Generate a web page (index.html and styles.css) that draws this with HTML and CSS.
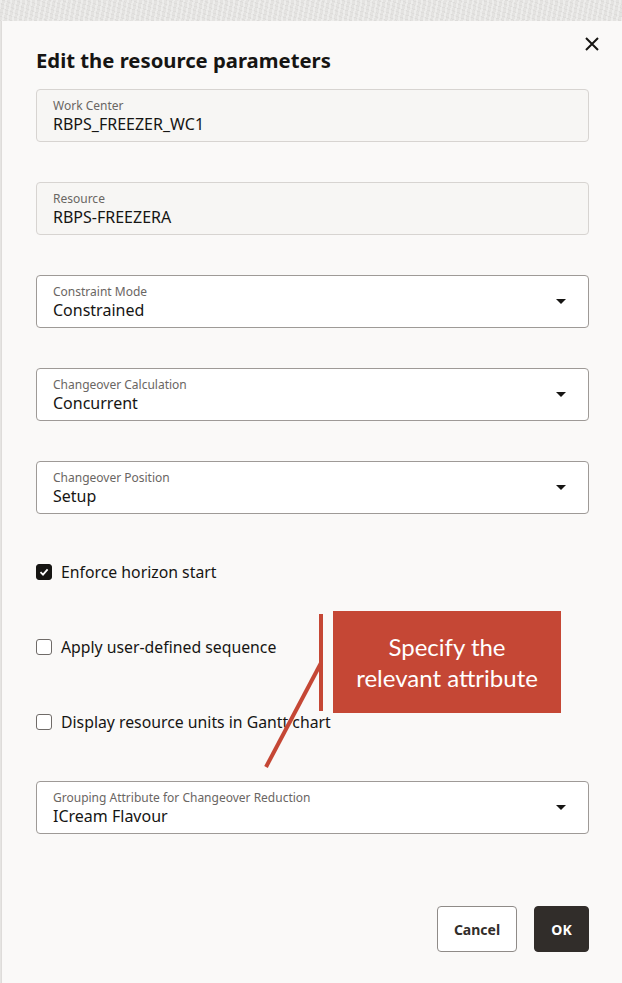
FILE: index.html
```html
<!DOCTYPE html>
<html lang="en">
<head>
<meta charset="utf-8">
<title>Edit the resource parameters</title>
<link rel="stylesheet" href="styles.css">
</head>
<body>
<div class="backdrop"></div>
<div class="dialog">
  <div class="header">
    <h1 class="title">Edit the resource parameters</h1>
    <button class="close" aria-label="Close">
      <svg width="16" height="16" viewBox="0 0 16 16"><path d="M2 2 L14 14 M14 2 L2 14" stroke="#161513" stroke-width="2" fill="none"/></svg>
    </button>
  </div>

  <div class="form">
    <div class="field readonly">
      <div class="label">Work Center</div>
      <div class="value">RBPS_FREEZER_WC1</div>
    </div>
    <div class="field readonly">
      <div class="label">Resource</div>
      <div class="value">RBPS-FREEZERA</div>
    </div>
    <div class="field select">
      <div class="label">Constraint Mode</div>
      <div class="value">Constrained</div>
      <span class="caret"></span>
    </div>
    <div class="field select">
      <div class="label">Changeover Calculation</div>
      <div class="value">Concurrent</div>
      <span class="caret"></span>
    </div>
    <div class="field select">
      <div class="label">Changeover Position</div>
      <div class="value">Setup</div>
      <span class="caret"></span>
    </div>

    <div class="check-row first">
      <span class="box checked">
        <svg width="10" height="10" viewBox="0 0 10 10"><path d="M1.5 5.2 L4 7.6 L8.6 2.4" stroke="#fff" stroke-width="1.8" fill="none"/></svg>
      </span>
      <span class="check-label">Enforce horizon start</span>
    </div>
    <div class="check-row">
      <span class="box"></span>
      <span class="check-label">Apply user-defined sequence</span>
    </div>
    <div class="check-row">
      <span class="box"></span>
      <span class="check-label">Display resource units in Gantt chart</span>
    </div>

    <div class="field select last">
      <div class="label">Grouping Attribute for Changeover Reduction</div>
      <div class="value">ICream Flavour</div>
      <span class="caret"></span>
    </div>
  </div>

  <div class="footer">
    <button class="btn cancel">Cancel</button>
    <button class="btn ok">OK</button>
  </div>
</div>

<div class="callout">
  <svg class="callout-lines" width="70" height="160" viewBox="0 0 70 160">
    <rect x="55" y="3" width="4" height="97" fill="#c54735"/>
    <path d="M57 52 L2 156" stroke="#c54735" stroke-width="4" fill="none"/>
  </svg>
  <div class="callout-box">Specify the<br>relevant attribute</div>
</div>
</body>
</html>
```

FILE: styles.css
```css
* { box-sizing: border-box; }

html, body {
  margin: 0;
  padding: 0;
}

body {
  width: 622px;
  height: 983px;
  overflow: hidden;
  background: #e5e4e2;
  font-family: "Noto Sans", "Open Sans", sans-serif;
  color: #161513;
  position: relative;
}

.backdrop {
  height: 21px;
  background:
    repeating-linear-gradient(100deg, rgba(255,255,255,0.35) 0 2px, rgba(0,0,0,0) 2px 5px),
    repeating-linear-gradient(20deg, rgba(0,0,0,0.03) 0 1px, rgba(0,0,0,0) 1px 4px),
    #e4e3e1;
}

.dialog {
  height: 962px;
  margin-left: 1px;
  border-left: 1px solid #dedcda;
  background: #faf9f8;
  padding: 25px 33px 0 34px;
}

.header {
  display: flex;
  justify-content: space-between;
  align-items: flex-start;
}

.title {
  margin: 0;
  font-size: 20.3px;
  line-height: 28px;
  font-weight: 700;
}

.close {
  width: 24px;
  height: 24px;
  margin: -14px -15px 0 0;
  padding: 0;
  border: none;
  background: transparent;
  display: flex;
  align-items: center;
  justify-content: center;
}

.form {
  display: flex;
  flex-direction: column;
  margin-top: 15px;
}

.field {
  position: relative;
  height: 53px;
  border: 1px solid #d7d4d1;
  border-radius: 4px;
  padding: 9px 16px 0;
  margin-bottom: 40px;
  background: #f7f6f4;
}

.field.select {
  background: #ffffff;
  border-color: #9e9a97;
}

.field.last {
  margin-bottom: 0;
}

.label {
  font-size: 12px;
  line-height: 14px;
  color: #6a6663;
}

.value {
  margin-top: 2px;
  font-size: 16px;
  line-height: 18px;
  color: #161513;
}

.caret {
  position: absolute;
  right: 22px;
  top: 23px;
  width: 0;
  height: 0;
  border-left: 5px solid transparent;
  border-right: 5px solid transparent;
  border-top: 5px solid #161513;
}

.check-row {
  display: flex;
  align-items: center;
  height: 24px;
  gap: 9px;
  margin-bottom: 51px;
}

.check-row.first {
  margin-top: 6px;
}

.check-row + .field {
  margin-top: -4px;
}

.box {
  width: 16px;
  height: 16px;
  border: 1.5px solid #6f6b68;
  border-radius: 3px;
  background: #fff;
  display: flex;
  align-items: center;
  justify-content: center;
  flex: none;
}

.box.checked {
  background: #161513;
  border-color: #161513;
}

.check-label {
  font-size: 15.8px;
  line-height: 24px;
  color: #161513;
}

.footer {
  display: flex;
  justify-content: flex-end;
  gap: 17px;
  margin-top: 72px;
}

.btn {
  height: 46px;
  border-radius: 4px;
  font-family: "Noto Sans", "Open Sans", sans-serif;
  font-size: 14px;
  font-weight: 700;
  padding: 0;
}

.btn.cancel {
  width: 80px;
  background: #ffffff;
  border: 1px solid #8f8b88;
  color: #312d2a;
}

.btn.ok {
  width: 55px;
  background: #312d2a;
  border: 1px solid #312d2a;
  color: #ffffff;
}

.callout {
  position: absolute;
  left: 264px;
  top: 611px;
  display: flex;
  align-items: flex-start;
}

.callout-lines {
  display: block;
  margin-right: -2px;
}

.callout-box {
  width: 228px;
  height: 102px;
  margin-left: 1px;
  background: #c54735;
  color: #ffffff;
  font-family: Lato, "Open Sans", sans-serif;
  font-size: 24px;
  line-height: 31px;
  text-align: center;
  padding-top: 20px;
}
```
